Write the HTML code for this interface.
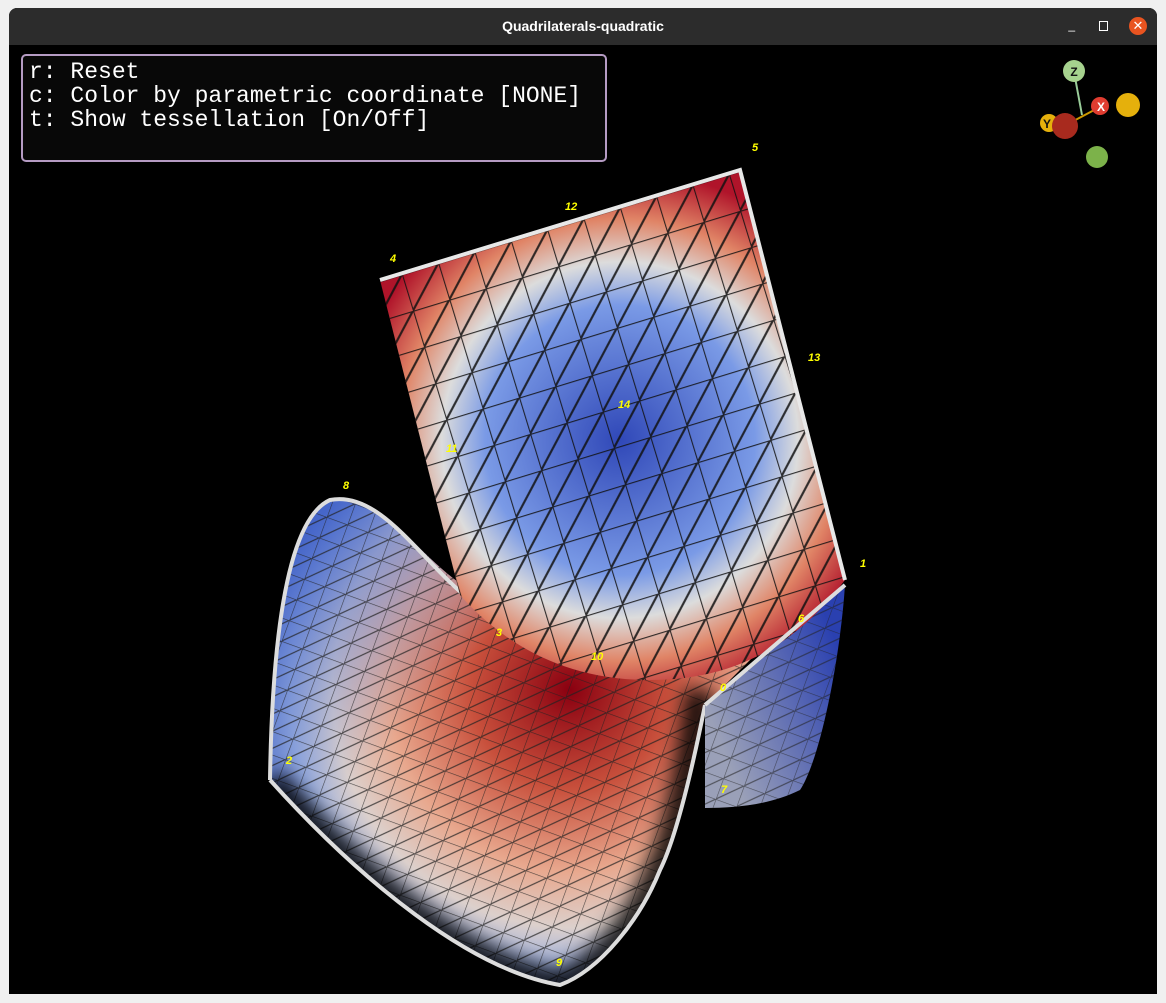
<!DOCTYPE html>
<html><head><meta charset="utf-8"><style>
body{margin:0;width:1166px;height:1003px;background:#f0f0f0;overflow:hidden;font-family:"Liberation Sans",sans-serif}
#win{position:absolute;left:9px;top:8px;width:1148px;height:986px;background:#000;border-radius:8px 8px 0 0;overflow:hidden}
#tb{height:37px;background:#2c2c2c;color:#fff;font-weight:bold;font-size:14px;text-align:center;line-height:37px}
#box{position:absolute;left:12px;top:46px;width:586px;height:108px;border:2px solid #b59bc3;border-radius:5px;background:#080808;color:#fff;font-family:"Liberation Mono",monospace;font-size:23px;line-height:24px;padding:4px 6px;box-sizing:border-box;white-space:pre}
</style></head><body>
<div id="win"><div id="tb">Quadrilaterals-quadratic</div>
<div style="position:absolute;right:82px;top:10px;color:#fff;font-size:12px">_</div>
<div style="position:absolute;right:49px;top:13px;width:7px;height:8px;border:1px solid #fff"></div>
<div style="position:absolute;right:10px;top:9px;width:18px;height:18px;border-radius:9px;background:#e95420;color:#fff;font-size:13px;text-align:center;line-height:18px">✕</div>
<div id="box">r: Reset
c: Color by parametric coordinate [NONE]
t: Show tessellation [On/Off]</div>
</div>
<svg width="1166" height="1003" style="position:absolute;left:0;top:0">
<defs>
<radialGradient id="g1" cx="620" cy="440" r="270" gradientUnits="userSpaceOnUse">
<stop offset="0" stop-color="#3048b8"/><stop offset="0.5" stop-color="#7a9ae6"/><stop offset="0.66" stop-color="#dcdcdc"/><stop offset="0.82" stop-color="#e08466"/><stop offset="1" stop-color="#b0142a"/></radialGradient>
<radialGradient id="g2" cx="570" cy="690" r="330" gradientUnits="userSpaceOnUse">
<stop offset="0" stop-color="#8a0010"/><stop offset="0.3" stop-color="#c8503c"/><stop offset="0.55" stop-color="#e8a88e"/><stop offset="0.72" stop-color="#dcd0cc"/><stop offset="0.85" stop-color="#98acdc"/><stop offset="1" stop-color="#4060c0"/></radialGradient>
<linearGradient id="bl" x1="280" y1="560" x2="430" y2="700" gradientUnits="userSpaceOnUse"><stop offset="0" stop-color="#3f60c8" stop-opacity=".85"/><stop offset="1" stop-color="#6f8ed8" stop-opacity="0"/></linearGradient>
<linearGradient id="g3" x1="705" y1="705" x2="840" y2="650" gradientUnits="userSpaceOnUse"><stop offset="0" stop-color="#9aa0b8"/><stop offset="1" stop-color="#2a40b0"/></linearGradient>
<pattern id="grid" width="38" height="38" patternUnits="userSpaceOnUse" patternTransform="rotate(-17)"><path d="M0 0H38M0 0V38M0 38L38 0" stroke="#111" stroke-width="2.2" fill="none"/></pattern>
<pattern id="grid2" width="22" height="22" patternUnits="userSpaceOnUse" patternTransform="rotate(20)"><path d="M0 0H22M0 0V22M0 22L22 0" stroke="#222" stroke-width="1.2" fill="none"/></pattern>
<filter id="bf"><feGaussianBlur stdDeviation="9"/></filter>
<clipPath id="cl"><path d="M270 780 C272 650 285 520 330 500 C380 490 420 560 470 590 L600 620 L800 610 L705 705 C690 780 675 840 660 870 C640 920 600 970 560 985 C470 970 360 880 270 780 Z"/></clipPath>
</defs>
<g clip-path="url(#cl)">
<rect x="260" y="480" width="560" height="510" fill="url(#g2)"/>
<rect x="260" y="480" width="560" height="510" fill="url(#bl)"/>
<rect x="260" y="480" width="560" height="510" fill="url(#grid2)" opacity=".75"/>
<path d="M700 690 C690 780 675 840 660 870 C640 920 600 970 560 985 C470 970 360 880 270 780" stroke="#000" stroke-width="30" fill="none" opacity=".85" filter="url(#bf)"/>
</g>
<path d="M270 780 C272 650 285 520 330 500 C380 490 420 560 470 600 M705 705 C690 780 675 840 660 870 C640 920 600 970 560 985 C470 970 360 880 270 780" stroke="#ddd" stroke-width="4" fill="none"/>
<path d="M705 705 L845 585 C840 660 820 760 800 790 C770 805 735 808 705 808 Z" fill="url(#g3)"/>
<path d="M705 705 L845 585 C840 660 820 760 800 790 C770 805 735 808 705 808 Z" fill="url(#grid2)" opacity=".6"/>
<path d="M380 280 L740 170 L845 580 C800 640 740 680 650 680 C560 680 500 640 460 595 Z" fill="url(#g1)"/>
<path d="M380 280 L740 170 L845 580 C800 640 740 680 650 680 C560 680 500 640 460 595 Z" fill="url(#grid)" opacity=".85"/>
<path d="M380 280 L740 170 L845 580" stroke="#e8e8e8" stroke-width="4" fill="none"/>
<path d="M705 705 L845 585" stroke="#ddd" stroke-width="4"/>
<g fill="#ff0" font-size="11" font-style="italic" font-weight="bold">
<text x="752" y="151">5</text><text x="565" y="210">12</text><text x="390" y="262">4</text><text x="808" y="361">13</text><text x="618" y="408">14</text><text x="446" y="452">11</text><text x="343" y="489">8</text><text x="860" y="567">1</text><text x="798" y="622">6</text><text x="496" y="636">3</text><text x="591" y="660">10</text><text x="720" y="691">0</text><text x="286" y="764">2</text><text x="721" y="793">7</text><text x="556" y="966">9</text></g>
<line x1="1074" y1="72" x2="1082" y2="115" stroke="#9c9" stroke-width="2"/>
<line x1="1066" y1="125" x2="1098" y2="108" stroke="#c90" stroke-width="2"/>
<circle cx="1128" cy="105" r="12" fill="#e5b00c"/>
<circle cx="1097" cy="157" r="11" fill="#7cb24a"/>
<circle cx="1049" cy="123" r="9" fill="#e5b00c"/>
<circle cx="1074" cy="71" r="11" fill="#a6d28e"/>
<circle cx="1100" cy="106" r="9" fill="#e03c30"/>
<circle cx="1065" cy="126" r="13" fill="#a82a1e"/>
<g font-size="12" font-weight="bold" fill="#111" text-anchor="middle"><text x="1074" y="76">Z</text><text x="1101" y="111" fill="#fff">X</text><text x="1047" y="128">Y</text></g>
</svg>
</body></html>
